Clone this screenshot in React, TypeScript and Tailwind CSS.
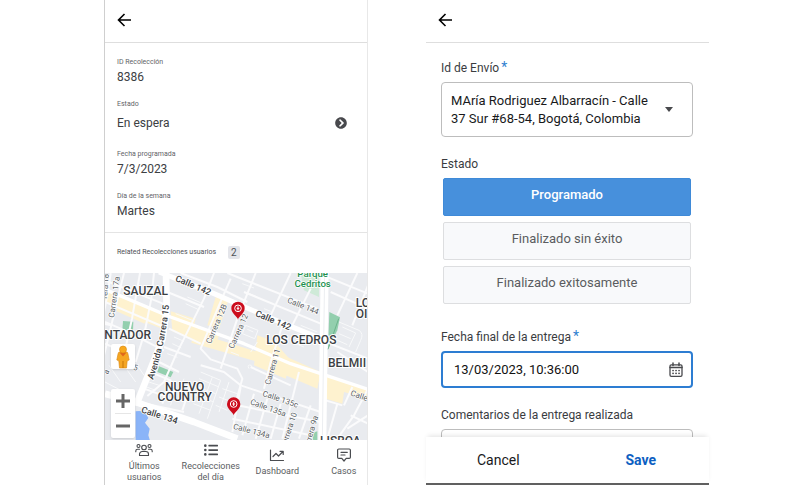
import { useState } from "react";
import type { ReactNode } from "react";
import { FaChevronCircleRight, FaListUl } from "react-icons/fa";

function Header() {
  return (
    <header className="flex h-[43px] shrink-0 items-center border-b border-[#dedede] px-3 pb-0.5">
      <button type="button" aria-label="Atrás" className="text-black">
        <svg width="15" height="14" viewBox="0 0 15 14" fill="none" stroke="currentColor" strokeWidth="1.600">
          <path d="M14 7H1.800M7.500 1 1.500 7l6 6" />
        </svg>
      </button>
    </header>
  );
}

function Field({ label, value, action }: { label: string; value: string; action?: ReactNode }) {
  return (
    <div>
      <dt className="text-[7px] leading-3 text-[#5f6368]">{label}</dt>
      <dd
        className={
          action
            ? "flex h-[26px] items-center justify-between text-xs text-[#3c4043]"
            : "text-xs leading-[18px] text-[#3c4043]"
        }
      >
        {value}
        {action}
      </dd>
    </div>
  );
}

function Pin({ x, y }: { x: number; y: number }) {
  return (
    <g transform={`translate(${x} ${y})`}>
      <path d="M0 0C-2-10-20-18-20-34a20 20 0 1 1 40 0C20-18 2-10 0 0Z" fill="#cc0c1c" />
      <circle cx="0" cy="-34" r="10" fill="none" stroke="#fff" strokeWidth="3" />
      <path d="M0-40v12M-4-34h8" stroke="#fff" strokeWidth="3" />
    </g>
  );
}

const minorStreets = [
  "M20 3 12 60 0 120",
  "M60 3 42 75 22 160 0 250",
  "M108 3 98 60 84 140 62 240",
  "M150 3 142 80 122 180 95 270",
  "M3 90 180 165",
  "M3 25 190 100",
  "M3 150 50 170 180 235",
  "M3 215 60 240",
  "M22 160 0 155",
  "M330 3 300 80 215 250 180 330 130 372",
  "M380 20 345 100 290 230 320 262 400 290 415 320 390 410",
  "M455 3 400 140 350 290",
  "M190 60 300 105",
  "M230 3 340 45 430 90",
  "M370 3 640 110",
  "M420 60 650 155",
  "M560 3 500 130",
  "M620 50 560 170",
  "M535 160 500 270 480 350",
  "M640 3 792 65",
  "M680 60 792 110",
  "M760 3 700 130",
  "M792 40 745 160",
  "M195 170 290 215",
  "M180 225 260 255",
  "M165 270 225 300",
  "M100 390 240 420",
  "M150 305 200 325 175 395",
  "M120 350 190 375",
  "M260 340 235 415",
  "M290 280 360 300 410 340 650 420",
  "M410 345 385 480",
  "M450 365 415 490",
  "M490 380 455 500",
  "M530 395 500 500",
  "M585 300 560 400 535 500",
  "M620 400 585 500",
  "M440 285 560 340",
  "M400 400 650 450",
  "M385 440 620 490",
  "M700 395 670 500",
  "M745 345 720 400",
  "M665 385 715 400",
  "M792 350 750 430 700 500",
  "M740 430 792 455",
  "M730 470 792 430",
  "M665 210 792 260",
  "M700 240 792 300",
];

const lanes = [
  "M250 75 290 92M245 95 282 112M222 30 280 50M215 125 265 145M210 195 240 208M205 215 232 228M190 245 220 256",
  "M460 75 430 62M415 35 450 48M480 110 500 118M425 160 462 175 452 200 415 185ZM430 172 448 180",
  "M590 160 640 180M580 185 640 205M575 215 600 225",
  "M705 150 765 175Q780 185 770 205L755 240M715 165 755 183 735 225M705 185 740 200M700 205 730 218",
  "M435 290q-8-14 8-10M440 240 460 210M380 240 405 250",
  "M290 300 350 325M285 320 345 345M280 345 335 365M275 370 330 390M268 395 320 415M350 325 310 440M325 315 285 425M375 330 345 420M355 350 400 365M345 375 385 390M335 400 370 415",
  "M135 330 165 340M128 345 155 355M215 335 200 400M240 320 228 350",
  "M15 280 50 330M3 330 60 360M70 295 95 330M100 280 120 310",
];

function CityMap() {
  return (
    <svg
      className="block h-full w-full"
      viewBox="3 3 789 501"
      preserveAspectRatio="xMinYMin slice"
      role="img"
      aria-label="Mapa"
      fontFamily="Roboto, sans-serif"
    >
      <rect x="0" y="0" width="1000" height="700" fill="#e9ebef" />

      <g fill="#fef2cf">
        <path d="M3 50 30 60 22 95 3 88ZM42 70 130 105 122 155 38 118ZM130 108 182 130 175 170 122 150Z" />
        <path d="M200 118 275 140 270 160 345 188 335 225 205 178ZM335 75 372 88 345 170 310 160Z" />
        <path d="M270 180 460 240 455 268 262 212ZM460 190 510 208 560 265 545 320 450 280Z" />
        <path d="M510 238 650 300 640 350 545 310ZM665 310 792 350 792 382 720 360 715 395 665 380Z" />
      </g>

      <g fill="#93cfae">
        <path d="M57 147 88 149 87 177 55 175Z" />
        <path d="M165 283 208 300 200 316 160 300Z" />
        <path d="M676 120 708 136 700 175 672 232Z" />
        <path d="M628 482 640 478 640 504 626 504Z" />
      </g>
      <path d="M590 3 645 3 645 75 600 55Z" fill="#cfead8" />
      <path d="M95 418q20-4 30 6l8 14-10 14 14 18-4 20 5 16H95Z" fill="#8ab4f8" />

      <g fill="none" stroke="#fbfbfc" strokeLinejoin="round">
        {lanes.map((d) => (
          <path key={d} d={d} strokeWidth="3" stroke="#f8f9fa" />
        ))}
        {minorStreets.map((d) => (
          <path key={d} d={d} strokeWidth="6" />
        ))}
      </g>
      <g fill="none" stroke="#fff" strokeLinejoin="round">
        <path d="M3 52 200 135 420 215 560 275 792 352" strokeWidth="10" />
        <path d="M165 0 330 65 480 130 650 200" strokeWidth="15" />
        <path d="M186 0 188 110 176 200 98 395" strokeWidth="20" />
        <path d="M3 365 100 392 270 450 400 500" strokeWidth="20" />
        <path d="M662 0 655 504" strokeWidth="24" />
      </g>
      <path d="M662 0 655 504" stroke="#eceef1" strokeWidth="3" />
      <path d="M704 140 672 232" stroke="#57a57a" strokeWidth="2" />

      <g
        fill="#5a5e63"
        fontSize="24"
        stroke="#fff"
        strokeWidth="4"
        strokeLinejoin="round"
        paintOrder="stroke"
      >
        <text transform="translate(30 138) rotate(-82)">Carrera 17a</text>
        <text transform="translate(9 80) rotate(-86)">rera 18</text>
        <text transform="translate(320 217) rotate(-67)">Carrera 12B</text>
        <text transform="translate(388 232) rotate(-66)">Carrera 12</text>
        <text transform="translate(498 340) rotate(-74)">Carrera 11</text>
        <text transform="translate(545 530) rotate(-72)">Carrera 10</text>
        <text transform="translate(612 540) rotate(-74)">Carrera 9a</text>
        <text transform="translate(548 91) rotate(22)">Calle 144</text>
        <text transform="translate(474 371) rotate(19)">Calle 135c</text>
        <text transform="translate(437 396) rotate(20)">Calle 135a</text>
        <text transform="translate(386 470) rotate(15)">Calle 134a</text>
        <text transform="translate(738 370) rotate(19)">Calle</text>
        <text transform="translate(80 292) rotate(12)">-5</text>
        <text transform="translate(12 308) rotate(-70)">a</text>
      </g>

      <g
        fill="#3c4043"
        fontSize="27"
        fontWeight="500"
        stroke="#fff"
        strokeWidth="5"
        strokeLinejoin="round"
        paintOrder="stroke"
      >
        <text transform="translate(212 26) rotate(23)">Calle 142</text>
        <text transform="translate(452 131) rotate(23)">Calle 142</text>
        <text transform="translate(110 421) rotate(18)">Calle 134</text>
        <path id="avenida" d="M147 324Q186 215 198 70" fill="none" stroke="none" />
        <text>
          <textPath href="#avenida">Avenida Carrera 15</textPath>
        </text>
      </g>

      <g
        fill="#3c4043"
        fontSize="36"
        fontWeight="500"
        stroke="#fff"
        strokeWidth="6"
        strokeLinejoin="round"
        paintOrder="stroke"
      >
        <text x="125" y="70" textAnchor="middle">SAUZAL</text>
        <text x="141" y="201" textAnchor="end">NTADOR</text>
        <text x="242" y="356" textAnchor="middle">NUEVO</text>
        <text x="242" y="388" textAnchor="middle">COUNTRY</text>
        <text x="592" y="215" textAnchor="middle">LOS CEDROS</text>
        <text x="672" y="284">BELMII</text>
        <text x="755" y="106">LO</text>
        <text x="755" y="138">OI</text>
        <text x="648" y="518">LISBOA</text>
      </g>

      <g
        fill="#1e9150"
        fontSize="29"
        fontWeight="500"
        textAnchor="middle"
        stroke="#fff"
        strokeWidth="4"
        paintOrder="stroke"
      >
        <text x="626" y="16">Parque</text>
        <text x="626" y="45">Cedritos</text>
      </g>

      <Pin x={402} y={143} />
      <Pin x={389} y={430} />
    </svg>
  );
}

function Pegman() {
  return (
    <svg width="16" height="24" viewBox="0 0 16 24" aria-hidden="true">
      <path
        d="M3 9q0-2 2-2h6q2 0 2 2l1.200 6-2 .8L11.500 23h-7L3.800 15.800l-2-.8Z"
        fill="#f5a623"
        stroke="#d98610"
        strokeWidth=".6"
      />
      <path d="m4.500 7.500 3.500 4 3.500-4Z" fill="#e0661c" />
      <path d="M8 16v7" stroke="#c77708" />
      <circle cx="8" cy="4.500" r="3.500" fill="#f8a91f" stroke="#d98610" strokeWidth=".6" />
    </svg>
  );
}

function MapPanel() {
  return (
    <div className="relative min-h-0 flex-1 overflow-hidden">
      <CityMap />
      <div className="absolute bottom-0.5 left-1.5 flex w-6 flex-col gap-5">
        <button
          type="button"
          aria-label="Street View"
          className="flex h-[25px] items-center justify-center rounded-xs bg-white shadow"
        >
          <Pegman />
        </button>
        <div className="flex flex-col rounded-xs bg-white px-1 shadow">
          <button type="button" aria-label="Acercar" className="flex h-6 items-center justify-center">
            <svg width="14" height="14" viewBox="0 0 14 14" stroke="#666" strokeWidth="3">
              <path d="M7 0v14M0 7h14" />
            </svg>
          </button>
          <button
            type="button"
            aria-label="Alejar"
            className="flex h-[25px] items-center justify-center border-t border-[#e6e6e6]"
          >
            <svg width="14" height="14" viewBox="0 0 14 14" stroke="#666" strokeWidth="3">
              <path d="M0 7h14" />
            </svg>
          </button>
        </div>
      </div>
    </div>
  );
}

const stroke = {
  fill: "none",
  stroke: "currentColor",
  strokeLinecap: "round",
  strokeLinejoin: "round",
} as const;

function TeamIcon() {
  return (
    <svg width="18" height="14" viewBox="0 0 18 14" strokeWidth="1.100" {...stroke}>
      <circle cx="3.500" cy="3" r="1.500" />
      <circle cx="14.500" cy="3" r="1.500" />
      <circle cx="9" cy="4.500" r="2.300" />
      <path d="M4.500 12.500v-1.300a2.700 2.700 0 0 1 2.700-2.700h3.600a2.700 2.700 0 0 1 2.700 2.700v1.300ZM.8 8.800V8q0-1.700 1.700-1.700h2M17.200 8.800V8q0-1.700-1.700-1.700h-2" />
    </svg>
  );
}

function ChartIcon() {
  return (
    <svg width="16" height="14" viewBox="0 0 16 14" strokeWidth="1.200" {...stroke}>
      <path d="M1.500 2v10.500h13M4 8.500l3-3 2.500 2.500 4.500-4.500M11 3.300h3.200v3.200" />
    </svg>
  );
}

function MessageIcon() {
  return (
    <svg width="16" height="14" viewBox="0 0 16 14" strokeWidth="1.200" {...stroke}>
      <path d="M2.800 1h10.400q1.200 0 1.200 1.200v7q0 1.200-1.200 1.200h-3L8 13l-2.200-2.600h-3q-1.200 0-1.200-1.200v-7Q1.600 1 2.800 1ZM5 4.300h6.300M5 7h4" />
    </svg>
  );
}

function CalendarIcon() {
  return (
    <svg width="14" height="16" viewBox="0 0 14 16" strokeWidth="1.300" {...stroke}>
      <rect x="1" y="2.800" width="12" height="11.500" rx="1.300" />
      <path d="M1 5.500h12M4 1v2.500M10 1v2.500" strokeWidth="1.500" />
      <path d="M4 8.500h.1M7 8.500h.1M10 8.500h.1M4 11.300h.1M7 11.300h.1M10 11.300h.1" strokeWidth="1.700" />
    </svg>
  );
}

const tabs = [
  { label: "Últimos usuarios", icon: <TeamIcon /> },
  { label: "Recolecciones del día", icon: <FaListUl size={14} /> },
  { label: "Dashboard", icon: <ChartIcon /> },
  { label: "Casos", icon: <MessageIcon /> },
];

function PickupScreen() {
  return (
    <section className="col-start-2 flex min-h-0 min-w-0 flex-col overflow-hidden border-x border-l-[#cfcfcf] border-r-[#e8e8e8]">
      <Header />
      <dl className="flex flex-col gap-3 border-b border-[#e4e4e4] px-3 pt-[13px] pb-3">
        <Field label="ID Recolección" value="8386" />
        <Field
          label="Estado"
          value="En espera"
          action={
            <button type="button" aria-label="Siguiente estado" className="mr-2 text-[#48494d]">
              <FaChevronCircleRight size={12} />
            </button>
          }
        />
        <Field label="Fecha programada" value="7/3/2023" />
        <Field label="Día de la semana" value="Martes" />
      </dl>
      <div className="flex h-10 shrink-0 items-center gap-3 px-3 pb-0.5 text-[7px] text-[#4d5156]">
        <h2>Related Recolecciones usuarios</h2>
        <span className="rounded-xs bg-[#e4e5ea] px-[3px] text-[10px] leading-[13px]">2</span>
      </div>
      <MapPanel />
      <nav className="-mr-2.5 grid h-[45px] shrink-0 grid-cols-4 bg-white pl-1.5 text-[9px] leading-[11px] text-[#5a5d61]">
        {tabs.map((tab) => (
          <a key={tab.label} href="#" className="flex flex-col items-center justify-center gap-1 px-0.5 text-center">
            <span className="flex h-3.5 items-center text-[#4a4c50]">{tab.icon}</span>
            <span className={tab.label === "Últimos usuarios" ? "w-9" : ""}>{tab.label}</span>
          </a>
        ))}
      </nav>
    </section>
  );
}

const states = ["Programado", "Finalizado sin éxito", "Finalizado exitosamente"];

function Required() {
  return <span className="ml-0.5 text-sm leading-none text-[#2f7fd0]">*</span>;
}

function DeliveryForm() {
  const [state, setState] = useState(states[0]);

  return (
    <section className="col-start-4 flex min-h-0 min-w-0 flex-col">
      <Header />
      <form className="flex min-h-0 flex-1 flex-col">
        <div className="flex min-h-0 flex-1 flex-col overflow-hidden px-4 pt-4 pl-[15px] text-xs leading-[18px] text-[#3a3c3f]">
          <label htmlFor="envio" className="mb-[5px] h-[18px] shrink-0">
            Id de Envío
            <Required />
          </label>
          <div className="relative mb-[18px] shrink-0">
            <select
              id="envio"
              className="block h-[55px] w-full appearance-none rounded-sm border border-[#bdbdbd] bg-white pr-10 pl-[9px] text-[13px] leading-[18px] whitespace-normal text-[#18191b]"
            >
              <option>MAría Rodriguez Albarracín - Calle 37 Sur #68-54, Bogotá, Colombia</option>
            </select>
            <svg
              className="pointer-events-none absolute top-[25px] right-5"
              width="8"
              height="5"
              viewBox="0 0 8 5"
              fill="#48494d"
            >
              <path d="M0 0h8L4 5Z" />
            </svg>
          </div>

          <h2 id="estado" className="mb-[5px]">
            Estado
          </h2>
          <div role="group" aria-labelledby="estado" className="mb-6 flex flex-col gap-1.5 pr-0.5 pl-0.5">
            {states.map((name) => (
              <button
                key={name}
                type="button"
                aria-pressed={name === state}
                onClick={() => setState(name)}
                className={
                  name === state
                    ? "h-[38px] rounded-xs border border-[#3f8ad8] bg-[#4790dc] pb-1 text-[13px] font-medium text-white"
                    : "h-[38px] rounded-xs border border-[#dddee0] bg-[#f8f9fb] pb-1 text-[13px] text-[#5a5c60]"
                }
              >
                {name}
              </button>
            ))}
          </div>

          <label htmlFor="fecha" className="mb-[5px] h-[18px] shrink-0">
            Fecha final de la entrega
            <Required />
          </label>
          <div className="mb-[18px] flex h-[37px] shrink-0 items-center rounded-sm border-2 border-[#2d7dd2] pr-2 pl-[11px]">
            <input
              id="fecha"
              type="text"
              defaultValue="13/03/2023, 10:36:00"
              className="min-w-0 flex-1 text-[13px] text-[#111] outline-none"
            />
            <button type="button" aria-label="Abrir calendario" className="text-[#48494d]">
              <CalendarIcon />
            </button>
          </div>

          <label htmlFor="comentarios" className="mb-[5px] h-[18px] shrink-0">
            Comentarios de la entrega realizada
          </label>
          <textarea
            id="comentarios"
            className="h-14 shrink-0 resize-none rounded-sm border border-[#bdbdbd] px-2.5 py-2"
          />
        </div>
        <div className="z-10 flex h-12 shrink-0 items-center border-b-2 border-[#606060] bg-white text-sm shadow-[0_-3px_5px_-2px_rgba(0,0,0,0.12)]">
          <button type="button" className="flex-1 pl-1 text-[#18191b]">
            Cancel
          </button>
          <button type="submit" className="flex-1 pl-1.5 font-bold text-[#0d5fc2]">
            Save
          </button>
        </div>
      </form>
    </section>
  );
}

export default function App() {
  return (
    <main className="grid h-screen grid-cols-[104fr_264fr_58fr_283fr_91fr] grid-rows-1 bg-white font-['Roboto',sans-serif]">
      <PickupScreen />
      <DeliveryForm />
    </main>
  );
}
